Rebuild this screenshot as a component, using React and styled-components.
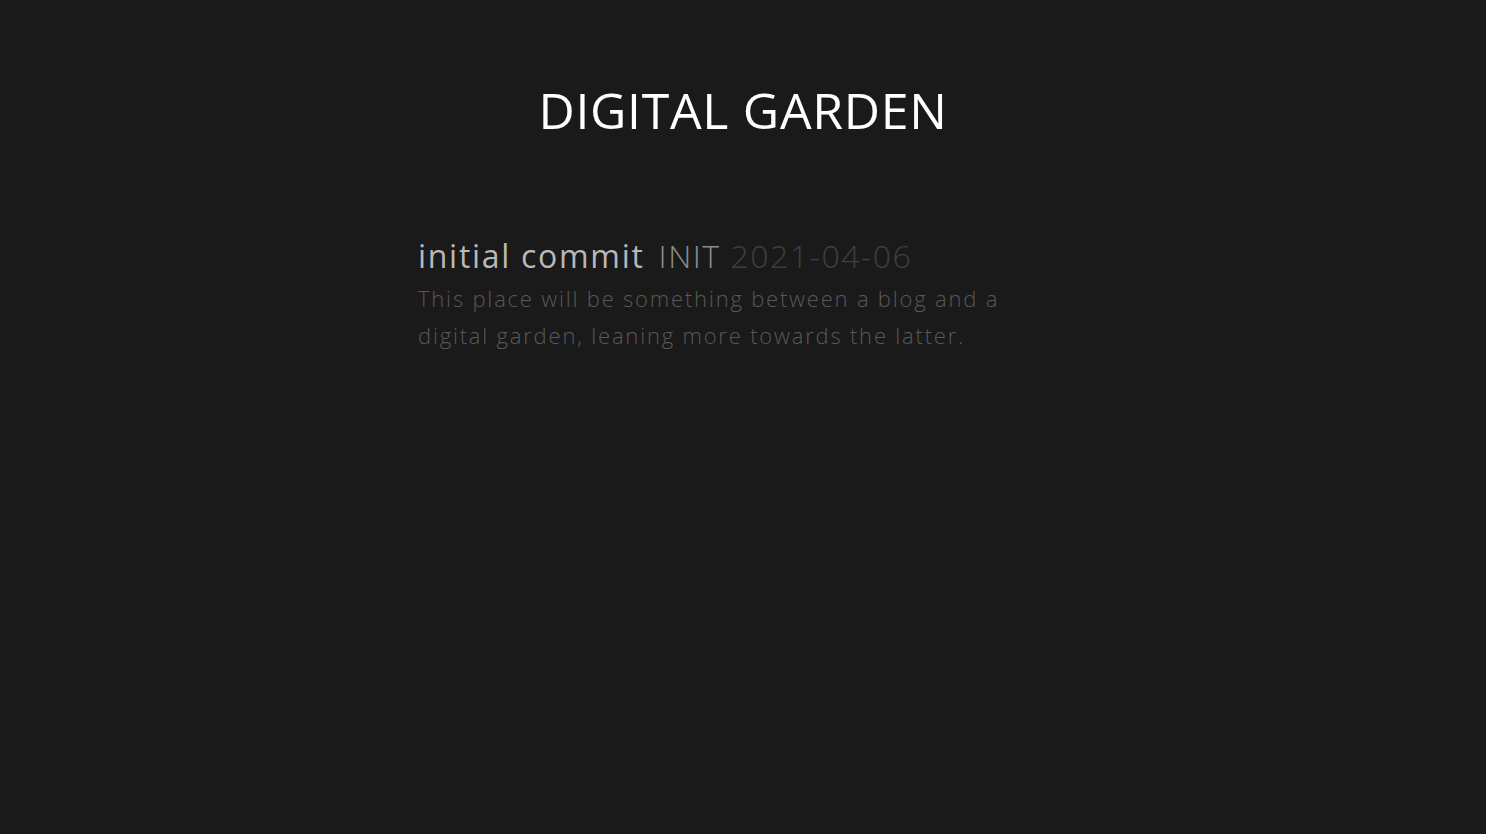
import React from "react";
import styled, { createGlobalStyle } from "styled-components";

const GlobalStyle = createGlobalStyle`
  html, body {
    margin: 0;
    padding: 0;
    background: #1a1a1a;
  }
  body {
    font-family: "Open Sans", "Noto Sans", sans-serif;
    font-weight: 300;
  }
`;

const Page = styled.div`
  min-height: 834px;
  display: flex;
  flex-direction: column;
  align-items: center;
`;

const Header = styled.header`
  padding-top: 78px;
  padding-bottom: 94px;
`;

const Title = styled.h1`
  margin: 0;
  color: #ffffff;
  font-size: 50px;
  font-weight: 400;
  letter-spacing: 0.7px;
  line-height: 64px;
`;

const PostList = styled.main`
  width: 650px;
`;

const Post = styled.article`
  display: flex;
  flex-direction: column;
`;

const PostHead = styled.div`
  display: flex;
  align-items: baseline;
  font-size: 32px;
  line-height: 40px;
  letter-spacing: 1.5px;
`;

const PostTitle = styled.span`
  color: #b8b8b8;
  font-weight: 400;
  letter-spacing: 1.7px;
  margin-right: 14px;
`;

const Tag = styled.span`
  color: #8c8c8c;
  margin-right: 10px;
`;

const PostDate = styled.span`
  color: #3f3f3f;
`;

const Summary = styled.p`
  margin: 4px 0 0;
  width: 600px;
  color: #585858;
  font-size: 22px;
  line-height: 37px;
  letter-spacing: 1.8px;
`;

export default function App() {
  return (
    <>
      <GlobalStyle />
      <Page>
        <Header>
          <Title>DIGITAL GARDEN</Title>
        </Header>
        <PostList>
          <Post>
            <PostHead>
              <PostTitle>initial commit</PostTitle>
              <Tag>INIT</Tag>
              <PostDate>2021-04-06</PostDate>
            </PostHead>
            <Summary>
              This place will be something between a blog and a digital garden, leaning more towards the latter.
            </Summary>
          </Post>
        </PostList>
      </Page>
    </>
  );
}
